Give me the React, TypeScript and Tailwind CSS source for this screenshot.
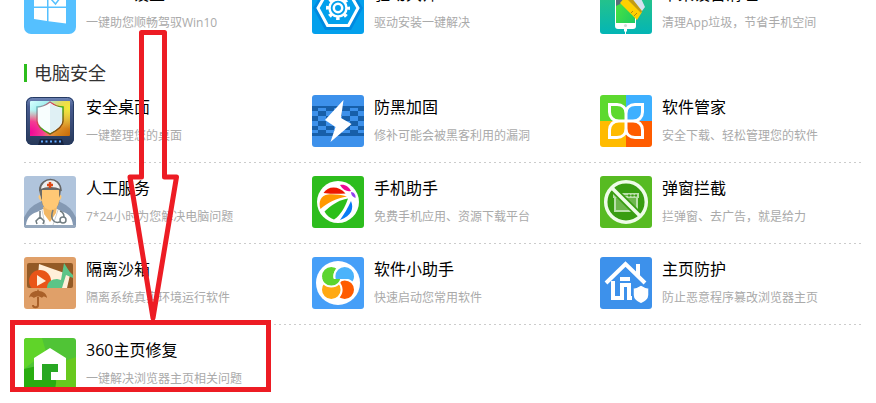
import type { ReactNode } from "react";

type Tool = { title: string; desc: string; icon: ReactNode };

function Icon({ children }: { children: ReactNode }) {
  return (
    <svg viewBox="0 0 52 52" className="size-13 shrink-0 rounded-[3px]" aria-hidden="true">
      {children}
    </svg>
  );
}

const win10 = (
  <svg viewBox="0 0 52 52" className="size-13 shrink-0 rounded-[7px]" aria-hidden="true">
    <rect width="52" height="52" fill="#55c0ff" />
    <path d="M10 12l13-2v14.500H10zM24.500 9.500L42 7v17.500H24.500zM10 26h13v13L10 37zM24.500 26H42v15.500l-17.500-2.200z" fill="#fff" />
    <path d="M27 17l4.500 5 6-8" fill="none" stroke="#55c0ff" strokeWidth="1.500" />
  </svg>
);

const driver = (
  <Icon>
    <rect width="52" height="52" fill="#03a0ec" />
    <path d="M14 5h24l13 21-12 22H13L1 26z" fill="#0089e0" />
    <path d="M16 8.500h20L46 26 36.500 43.500h-21L6 26z" fill="#03a0ec" stroke="#fff" strokeWidth="3" />
    <circle cx="26" cy="26" r="10.500" fill="none" stroke="#fff" strokeWidth="3" strokeDasharray="3.500 4.747" strokeDashoffset="1.750" />
    <circle cx="26" cy="26" r="8.500" fill="none" stroke="#fff" strokeWidth="2.500" />
    <circle cx="26" cy="26" r="4.200" fill="none" stroke="#fff" strokeWidth="2.500" />
  </Icon>
);

const cleaner = (
  <Icon>
    <defs>
      <linearGradient id="cleanBg" x1="0" y1="0" x2="0" y2="1">
        <stop offset="0" stopColor="#35c976" />
        <stop offset="1" stopColor="#03b5b5" />
      </linearGradient>
      <linearGradient id="cleanScreen" x1="0" y1="0" x2="1" y2="1">
        <stop offset="0" stopColor="#59e935" />
        <stop offset="1" stopColor="#1ccb63" />
      </linearGradient>
    </defs>
    <rect width="52" height="52" fill="url(#cleanBg)" />
    <rect x="15" y="4" width="21" height="43" rx="3" fill="#fff" />
    <rect x="16" y="8" width="19" height="33" fill="url(#cleanScreen)" />
    <circle cx="25.500" cy="43.500" r="1.500" fill="#d4d9dd" />
    <path d="M24 46.500h3v3h-1V52h-1v-2.500h-1z" fill="#fff" />
    <path d="M16 15h7l1 5-8 4z" fill="#596e78" />
    <path d="M20 21l6-7 16 16-5 8z" fill="#ffd000" />
    <path d="M25 15l3-4 15 16-2 4z" fill="#c29b13" />
    <path d="M27 10h11l7 15-3 4z" fill="#d8e2ef" />
    <path d="M31 31l2-2M34 34l3-3" stroke="#a98a16" />
  </Icon>
);

const desktop = (
  <Icon>
    <defs>
      <linearGradient id="deskFrame" x1="0" y1="0" x2="0" y2="1">
        <stop offset="0" stopColor="#7187b8" />
        <stop offset=".2" stopColor="#485c90" />
        <stop offset="1" stopColor="#273858" />
      </linearGradient>
      <linearGradient id="deskWarm" x1="0" y1="0" x2="1" y2="1">
        <stop offset="0" stopColor="#d7ffff" />
        <stop offset=".25" stopColor="#a2eeee" />
        <stop offset=".5" stopColor="#f4b64d" />
        <stop offset="1" stopColor="#c96905" />
      </linearGradient>
      <radialGradient id="deskPink" cx="0" cy=".9" r=".65">
        <stop offset="0" stopColor="#f20598" />
        <stop offset=".5" stopColor="#f43d93" />
        <stop offset="1" stopColor="#ff8b70" stopOpacity="0" />
      </radialGradient>
      <radialGradient id="deskLime" cx="1" cy=".2" r=".6">
        <stop offset="0" stopColor="#f4ee38" />
        <stop offset="1" stopColor="#e0e952" stopOpacity="0" />
      </radialGradient>
      <linearGradient id="deskRim" x1="0" y1="0" x2="1" y2="1">
        <stop offset="0" stopColor="#47e2df" />
        <stop offset=".35" stopColor="#e13750" />
        <stop offset=".55" stopColor="#32b617" />
        <stop offset="1" stopColor="#b80d10" />
      </linearGradient>
    </defs>
    <rect x="2" y="2" width="48" height="48" rx="6" fill="url(#deskFrame)" />
    <rect x="2.500" y="2.500" width="47" height="47" rx="6" fill="none" stroke="#253a62" />
    <rect x="6" y="6" width="40" height="35" rx="1" fill="url(#deskWarm)" />
    <rect x="6" y="6" width="40" height="35" fill="url(#deskPink)" />
    <rect x="6" y="6" width="40" height="35" fill="url(#deskLime)" />
    <path d="M26 7c4 3 8 5 13 5v14c0 5-7 10-13 13-6-3-13-8-13-13V12c5 0 9-2 13-5z" fill="#f8fefe" stroke="url(#deskRim)" strokeWidth="1.500" />
    <path d="M26 8c4 3 8 5 12 5v13c0 4-6 9-12 12z" fill="#dff0f4" />
    <path d="M14 50l2-6h22l2 6z" fill="#17233f" />
    <path d="M17 46.500h20" stroke="#63aaff" strokeWidth="2" strokeDasharray="2 2.500" />
  </Icon>
);

const lightning = (
  <Icon>
    <rect width="52" height="52" fill="#3d91eb" />
    <path d="M0 11h52v30H0z" fill="#175fa9" />
    <path
      d="M6 13h8v3H6zM22 13h8v3h-8zM38 13h8v3h-8zM0 16h6v5H0zM14 16h8v5h-8zM30 16h8v5h-8zM46 16h6v5h-6zM6 21h8v5H6zM22 21h8v5h-8zM38 21h8v5h-8zM0 26h6v5H0zM14 26h8v5h-8zM30 26h8v5h-8zM46 26h6v5h-6zM6 31h8v4H6zM22 31h8v4h-8zM38 31h8v4h-8zM0 35h6v3H0zM14 35h8v3h-8zM30 35h8v3h-8zM46 35h6v3h-6z"
      fill="#3d91eb"
    />
    <path d="M31.500 5L13 25l10.500 7L18.500 47 39.500 29 29 23z" fill="#fff" />
  </Icon>
);

const manager = (
  <Icon>
    <path d="M0 0h26v26H0z" fill="#5dd92f" />
    <path d="M26 0h26v26H26z" fill="#3eb0ff" />
    <path d="M0 26h26v26H0z" fill="#ffbb00" />
    <path d="M26 26h26v26H26z" fill="#ff5c00" />
    <path
      d="M26 26H19C13 26 9.500 22 9.500 17V9.500H17c5 0 9 3 9 9zM26 26v-7.500c0-6 4-9 9-9h7.500V17c0 5-3.500 9-9.500 9zM26 26v7.500c0 6-4 9-9 9H9.500V35c0-5 3.500-9 9.500-9zM26 26h7c6 0 9.500 4 9.500 9v7.500H35c-5 0-9-3-9-9z"
      fill="none"
      stroke="#fff"
      strokeWidth="3"
    />
  </Icon>
);

const doctor = (
  <Icon>
    <rect width="52" height="52" fill="#b0c4dc" />
    <circle cx="26" cy="52" r="28" fill="#8499b3" />
    <path d="M2 49c1-8 5-11 11-13l8-4h10l8 4c6 2 9 5 10 13z" fill="#fff" />
    <path d="M19 31h14l-1 6-6 9-6-8z" fill="#f3b865" />
    <path d="M15 14c0-14 22-14 22 0l-2 13c-2 8-15 8-17 0z" fill="#6c6b67" />
    <path d="M18 14h17v11c0 5-4 9-8.500 9S18 30 18 25z" fill="#ffc875" />
    <path d="M16 19c-3 0-1 6 2 6M36 19c3 0 1 6-2 6" fill="#ffc875" />
    <path d="M16 14c1-14 20-14 21 0-7-3-14-3-21 0z" fill="#eee" stroke="#666" strokeWidth="1.500" />
    <path d="M26 6v6M23 9h6" stroke="#dc4813" strokeWidth="2.500" />
    <path d="M18 34l3 15M34 34l-5 15" stroke="#ccd0d1" strokeWidth="1" />
    <path d="M16 35v7M13 48l-1-3 4-4 4 4-1 3M36 35c3 1 4 3 4 6M29 34c-3 8 0 14 7 12" fill="none" stroke="#707c80" strokeWidth="1.500" />
    <circle cx="39" cy="44" r="3" fill="#fff" stroke="#707c80" strokeWidth="1.500" />
    <path d="M0 49h52v3H0z" fill="#96a8bd" />
  </Icon>
);

const phone = (
  <Icon>
    <rect width="52" height="52" fill="#2dbd1d" />
    <circle cx="26" cy="26" r="21" fill="#fff" />
    <path d="M11.500 17c4-7 15-8 22 0.500-7 0.500-14 0.500-22-0.500z" fill="#ec1800" />
    <path d="M28 9c5-1 9 2 11 6-4 1-8-1-11-6z" fill="#ef0695" />
    <path d="M39 16c3 0 5 3 4.500 6-3-1-4.500-3-4.500-6z" fill="#9240f0" />
    <path d="M8.500 33C6 26 9 19 16 18.500 23 18 29 19 35 20.500 25 22 15 27 8.500 33z" fill="#ff9800" />
    <path d="M12.500 35.500C19 29 27 24 36 22.500 33 31 29 39 22 43.500 18 42 14.500 39.500 12.500 35.500z" fill="#2bbf19" />
    <path d="M39 25c3 7 1 15-11 19 4-6 8-12 11-19z" fill="#087bf4" />
  </Icon>
);

const popup = (
  <Icon>
    <rect width="52" height="52" fill="#57bb22" />
    <circle cx="26" cy="26" r="20" fill="#399d12" />
    <path d="M14 17h24v18H14z" fill="#6eb64e" />
    <path d="M15 22v13h22V22M14 18h24v3H14z" fill="none" stroke="#b9dfab" strokeWidth="2" />
    <path d="M28 19.500h9" stroke="#399d12" strokeWidth="2" strokeDasharray="2 1.500" />
    <path d="M12 12l28 28" stroke="#399d12" strokeWidth="7" />
    <path d="M12 12l28 28" stroke="#effce9" strokeWidth="3.500" />
    <circle cx="26" cy="26" r="20.300" fill="none" stroke="#effce9" strokeWidth="3.500" />
  </Icon>
);

const sandbox = (
  <Icon>
    <rect width="52" height="52" fill="#e0a069" />
    <rect x="3" y="6" width="46" height="25" rx="2" fill="#935a26" />
    <path d="M15 7l31 11-3 13H13z" fill="#ffefda" />
    <circle cx="16" cy="24" r="11" fill="#e95518" />
    <path d="M13 18v11l9-5z" fill="#ffefda" />
    <path d="M23 31c0-6 5-9 10-9l4 1 3-17c3 4 5 9 9 12v3l-7-3-4 13z" fill="#5cc487" />
    <path d="M3 31h46v4H3z" fill="#e0a069" />
    <path d="M5 41c1-5 4-7 8-7l1-2 1 2c4 0 8 3 8 7-2-2-4-2-5 0-2-2-6-2-8 0-2-2-4-2-5 0z" fill="#a96029" />
    <path d="M14 40v8c0 3-5 3-5 0" fill="none" stroke="#a96029" strokeWidth="2" />
  </Icon>
);

const assistant = (
  <Icon>
    <defs>
      <clipPath id="petalLow">
        <path d="M0 21h52v31H0z" />
      </clipPath>
      <clipPath id="petalHigh">
        <path d="M0 0h52v22H0z" />
      </clipPath>
    </defs>
    <rect width="52" height="52" fill="#469ff8" />
    <circle cx="26" cy="26" r="22" fill="#fff" />
    <g stroke="#fff" strokeWidth="2">
      <circle cx="19.300" cy="19.300" r="10.300" fill="#5dd52f" />
      <circle cx="32.700" cy="19.300" r="10.300" fill="#4bb3fb" />
      <circle cx="32.700" cy="32.700" r="10.300" fill="#ff5c00" />
      <circle cx="19.300" cy="32.700" r="10.300" fill="#ffa913" />
      <circle cx="19.300" cy="19.300" r="10.300" fill="#5dd52f" clipPath="url(#petalLow)" />
      <circle cx="32.700" cy="19.300" r="10.300" fill="#4bb3fb" clipPath="url(#petalHigh)" />
    </g>
  </Icon>
);

const homeGuard = (
  <Icon>
    <rect width="52" height="52" fill="#3d91eb" />
    <path d="M6 26L25.500 7 45 26M38 7v12" fill="none" stroke="#fff" strokeWidth="4" />
    <path d="M13 24v17h9V28h7v13h3" fill="none" stroke="#fff" strokeWidth="4" />
    <path d="M20 20h10v4H20z" fill="#fff" />
    <path d="M41 28c3 2 5 3 8 3v7c0 5-4 7-8 9-4-2-8-4-8-9v-7c3 0 5-1 8-3z" fill="#fff" stroke="#3d91eb" strokeWidth="1.500" />
  </Icon>
);

const homeRepair = (
  <Icon>
    <rect width="52" height="52" fill="#50c436" />
    <path d="M0 0h18l4 14L0 31z" fill="#60d429" />
    <path d="M0 31l26-6 9 27H0z" fill="#29ad10" />
    <path d="M35 25l17-6v33H31z" fill="#68c91e" />
    <path d="M10 20l16-10 16 10v22H27v-8h7v-8H18v16h-8z" fill="#fff" />
    <path d="M18 26h16v8h-7v8h-9z" fill="#28a723" />
  </Icon>
);

const upgradeTools: Tool[] = [
  { title: "Win10设置", desc: "一键助您顺畅驾驭Win10", icon: win10 },
  { title: "驱动大师", desc: "驱动安装一键解决", icon: driver },
  { title: "苹果设备清理", desc: "清理App垃圾，节省手机空间", icon: cleaner },
];

const securityRows: Tool[][] = [
  [
    { title: "安全桌面", desc: "一键整理您的桌面", icon: desktop },
    { title: "防黑加固", desc: "修补可能会被黑客利用的漏洞", icon: lightning },
    { title: "软件管家", desc: "安全下载、轻松管理您的软件", icon: manager },
  ],
  [
    { title: "人工服务", desc: "7*24小时为您解决电脑问题", icon: doctor },
    { title: "手机助手", desc: "免费手机应用、资源下载平台", icon: phone },
    { title: "弹窗拦截", desc: "拦弹窗、去广告，就是给力", icon: popup },
  ],
  [
    { title: "隔离沙箱", desc: "隔离系统真实环境运行软件", icon: sandbox },
    { title: "软件小助手", desc: "快速启动您常用软件", icon: assistant },
    { title: "主页防护", desc: "防止恶意程序篡改浏览器主页", icon: homeGuard },
  ],
  [{ title: "360主页修复", desc: "一键解决浏览器主页相关问题", icon: homeRepair }],
];

function ToolRow({ tools }: { tools: Tool[] }) {
  return (
    <ul className="grid grid-cols-3 gap-x-6 pt-[13px] pb-[15px]">
      {tools.map((tool) => (
        <li key={tool.title}>
          <a href="#" className="flex gap-[10px] whitespace-nowrap">
            {tool.icon}
            <span>
              <span className="block text-base leading-6 text-black">{tool.title}</span>
              <span className="mt-[7px] block text-xs leading-5 text-[#aaaaaa]">{tool.desc}</span>
            </span>
          </a>
        </li>
      ))}
    </ul>
  );
}

function DashedRule() {
  return (
    <div className="h-px bg-[repeating-linear-gradient(to_right,#cccccc_0px,#cccccc_2px,transparent_2px,transparent_5px)]" />
  );
}

export default function App() {
  return (
    <main className="relative overflow-hidden bg-white pr-3 pl-6 font-['Open_Sans','Noto_Sans_CJK_SC',sans-serif]">
      <div className="-mt-[31px]">
        <ToolRow tools={upgradeTools} />
      </div>
      <section>
        <h2 className="mt-[15px] flex h-[18px] items-center border-l-3 border-[#2dbd1d] pl-[7px] text-lg text-[#333333]">
          电脑安全
        </h2>
        {securityRows.map((tools, i) => (
          <div key={tools[0].title}>
            <ToolRow tools={tools} />
            {i < securityRows.length - 1 && <DashedRule />}
          </div>
        ))}
      </section>
      <svg className="pointer-events-none absolute top-0 left-0 h-[403px] w-[280px]" aria-hidden="true">
        <path
          d="M141.500 32.500H164.500V177H176.500L153 318 130 177H141.500Z"
          fill="none"
          stroke="#ed1c24"
          strokeWidth="5"
          strokeLinejoin="round"
        />
        <rect x="12.500" y="322.500" width="256" height="67" fill="none" stroke="#ed1c24" strokeWidth="5" />
      </svg>
    </main>
  );
}
